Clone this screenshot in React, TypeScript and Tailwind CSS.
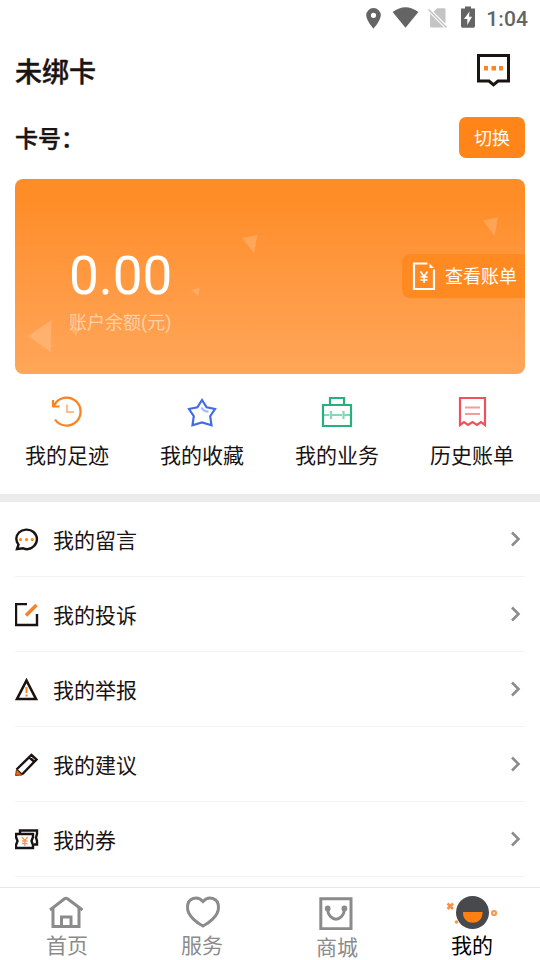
import type { ReactNode } from "react";

const font = "font-[Roboto,'Noto_Sans_CJK_SC',sans-serif]";

const StatusBar = () => (
  <div className="flex h-9 items-center justify-end pr-3 text-[#646464]">
    <svg width="118" height="36" viewBox="362 0 118 36" fill="currentColor">
      <path fillRule="evenodd" d="M373.5 8a7.3 7.3 0 0 1 7.3 7.3c0 5.2-7.3 13.4-7.3 13.4s-7.3-8.2-7.3-13.4a7.3 7.3 0 0 1 7.3-7.3zm0 4.7a2.6 2.6 0 1 0 0 5.2a2.6 2.6 0 1 0 0-5.2z" />
      <path d="M392.600 12Q405.500 2.500 418.400 12L405.500 27.700Z" />
      <path fill="#c4c4c4" d="M437 8.200h7.500q1 0 1 1V23.700L433.500 11.700zM430.500 14L444 27.500H431.500q-1.500 0-1.500-1.500V14z" />
      <path stroke="#c4c4c4" strokeWidth="1.600" d="M428.500 9.500L446.500 27.500" />
      <path fillRule="evenodd" d="M465 6.500h6V8.500h4V26q0 1.700-1.500 1.700H462.500Q461 27.700 461 26V8.500H465zM469.500 11.500L464 19H467.300V25L472 16.700H469Z" />
    </svg>
    <span className="ml-1.5 pt-0.5 text-[21px] leading-9 tracking-[0.1px] font-medium">1:04</span>
  </div>
);

const MessageIcon = () => (
  <svg width="34" height="34" viewBox="0 0 34 34" fill="none">
    <path d="M1.500 1.500H31.500V27H21L16.500 30.800L12 27H1.500Z" stroke="#1a1311" strokeWidth="3" />
    <path d="M7 12h4v4.500H7zM14.500 12h4.500v4.500h-4.500zM22 12h4v4.500h-4z" fill="#f5862a" />
  </svg>
);

const BillIcon = () => (
  <svg width="24" height="28" viewBox="0 0 24 28" fill="none" stroke="#fff" strokeWidth="2.200">
    <path d="M15.500 1.500H2V27H22V7.500" />
    <path d="M17.500 1.500L22 6H17.500Z" fill="#fff" stroke="none" />
    <path d="M8.500 9.500L12 14.500L15.500 9.500M12 14V21M8.500 15H15.500M8.500 18H15.500" strokeWidth="1.600" />
  </svg>
);

const shortcuts: { label: string; icon: ReactNode }[] = [
  {
    label: "我的足迹",
    icon: (
      <>
        <path d="M3.500 8.500A14 14 0 1 1 4 23.500" stroke="#fa821f" />
        <path d="M2 4V11M1.500 10.500H8.500M2 10.500L5 7" stroke="#fa821f" />
        <path d="M16 8.500V16H23" stroke="#ffbd91" />
      </>
    ),
  },
  {
    label: "我的收藏",
    icon: (
      <>
        <path d="M16 4L20.600 11.300L29 13L24.200 20.200L25.500 29.200L16 26.500L6.500 29.200L7.800 20.200L3 13L11.400 11.300Z" stroke="#426be6" />
        <path d="M15.500 11.500Q17.500 15.500 22.500 15.700" stroke="#a9b9fa" />
      </>
    ),
  },
  {
    label: "我的业务",
    icon: (
      <>
        <path d="M3 19H8.500M11 19H21M23.500 19H29M10 15V23M22.500 15V23" stroke="#87d6b6" />
        <path d="M2 9H30V30H2ZM9 9V2H23V9" stroke="#24b27c" />
      </>
    ),
  },
  {
    label: "历史账单",
    icon: (
      <>
        <path d="M4 29V2H29V29L25 26L21 29L16.500 26L12 29L8 26Z" stroke="#ef525c" />
        <path d="M9 11.500H24M9 18H24" stroke="#f59a9f" />
      </>
    ),
  },
];

const menu: { label: string; icon: ReactNode }[] = [
  {
    label: "我的留言",
    icon: (
      <>
        <path d="M2 21L3.500 16.700C0.500 13 0.500 8 4 4.500C7.500 1 14.500 0.500 18.500 4C23 8 23 14 19 18C15.500 21.500 11 21.500 8.300 20.300Z" />
        <path d="M4 11.500a1.600 1.600 0 1 0 3.200 0a1.600 1.600 0 1 0-3.200 0M9.900 11.500a1.600 1.600 0 1 0 3.200 0a1.600 1.600 0 1 0-3.200 0M15.700 11.500a1.600 1.600 0 1 0 3.200 0a1.600 1.600 0 1 0-3.200 0" fill="#ff861c" stroke="none" />
      </>
    ),
  },
  {
    label: "我的投诉",
    icon: (
      <>
        <path d="M12 1H1V22H22V11" />
        <path d="M11 12.500L21.500 2" stroke="#f5832a" strokeWidth="3.500" />
      </>
    ),
  },
  {
    label: "我的举报",
    icon: (
      <>
        <path d="M11.500 2.500L21 21H2Z" strokeWidth="2.600" />
        <path d="M11.500 9V15M11.500 16.500V18.500" stroke="#ff861c" strokeWidth="2" />
      </>
    ),
  },
  {
    label: "我的建议",
    icon: (
      <>
        <path d="M1.500 16.500L16.500 2L21.500 6.500L7 21.500M14 4L19.500 9M1.500 17L6.500 21.500" />
        <path d="M0.500 22.500L1.500 16.500L7 22Z" fill="#ec6b16" stroke="#8a3a0b" strokeWidth="1" />
      </>
    ),
  },
  {
    label: "我的券",
    icon: (
      <>
        <path d="M5 6V2.500H22V6L21 9.500L22 13V16.500H19" />
        <path d="M1 6H18V9L16.500 13L18 17V20H1V17L2.500 13L1 9Z" />
        <path d="M6.800 9L9.800 12.500L12.800 9M9.800 12.500V18M7 13H12.600M7 15.500H12.600" stroke="#f5975a" strokeWidth="1.300" />
      </>
    ),
  },
];

const tabs: { label: string; icon: ReactNode; active?: boolean; shift?: string }[] = [
  {
    label: "首页",
    icon: (
      <>
        <path d="M9 17L23.500 5.700Q25 4.700 26.500 5.700L41.500 17" />
        <path d="M12 15V33.500H38V15" />
        <path d="M20.500 33V24H30V33" />
      </>
    ),
  },
  {
    label: "服务",
    icon: <path d="M27 33C22 30.500 11.500 23.500 11.500 14.500C11.500 4.500 21.500 2.500 27 8.500C32.500 2.500 42.500 4.500 42.500 14.500C42.500 23.500 32 30.500 27 33Z" />,
  },
  {
    label: "商城",
    shift: "pt-0.5",
    icon: (
      <>
        <path d="M9.800 5.800H40V35.700H9.800Z" />
        <path d="M16.500 16C17.500 29.500 32.500 29.500 33.500 16" />
        <path d="M13.800 15.500a2.900 2.900 0 1 0 5.800 0a2.900 2.900 0 1 0-5.800 0M30.500 15.500a2.900 2.900 0 1 0 5.800 0a2.900 2.900 0 1 0-5.800 0" fill="#8b8b8b" stroke="none" />
      </>
    ),
  },
  {
    label: "我的",
    active: true,
    icon: (
      <>
        <circle cx="26.500" cy="19.500" r="16.500" fill="#48494d" stroke="none" />
        <path d="M17 19H36.500V20C36.500 33 17 33 17 20Z" fill="#ff7f12" stroke="none" />
        <path d="M1.500 10.500L7 16M7 10.500L1.500 16" stroke="#f7914a" strokeWidth="2.600" />
        <circle cx="48" cy="20" r="2" stroke="#fa964e" strokeWidth="2.200" />
        <circle cx="10.500" cy="29" r="1.800" fill="#fa964e" stroke="none" />
      </>
    ),
  },
];

const App = () => {
  return (
    <div className={`flex h-[960px] w-[540px] flex-col overflow-hidden bg-white text-[#1a1311] ${font}`}>
      <StatusBar />

      {/* Header */}
      <header className="flex h-[68px] items-center justify-between pl-[15px] pr-[29px] pt-0.5">
        <h1 className="pt-1 text-[27px] font-medium leading-none [-webkit-text-stroke:0.4px]">未绑卡</h1>
        <MessageIcon />
      </header>
      <div className="flex h-[75px] items-center justify-between px-[15px] pb-[9px]">
        <span className="pt-1.5 text-[23px] font-medium [-webkit-text-stroke:0.4px]">卡号：</span>
        <button className="h-[41px] w-[66px] rounded-[7px] bg-[#ff8518] pt-1 text-lg leading-none text-white">切换</button>
      </div>

      {/* Balance card */}
      <section className="relative mx-[15px] flex h-[195px] shrink-0 items-start justify-between overflow-hidden rounded-[8px] bg-linear-to-b from-[#ff8d27] from-10% to-[#ffa658]">
        <svg className="absolute inset-0" width="510" height="195" viewBox="15 179 510 195" fill="#fff" fillOpacity="0.180">
          <path d="M28 336L51.500 320L50.500 352Z" />
          <path d="M242 238L257.500 235L254 253Z" />
          <path d="M191 290L199.500 288L198.500 296Z" />
          <path d="M483 220.500L498 217.500L494.500 236Z" />
          <path d="M70 328L80 327L76 336Z" />
        </svg>
        <div className="relative ml-[54px] mt-[67px] text-white">
          <div className="text-[53px] leading-[60px]">0.00</div>
          <div className="mt-1 text-lg leading-[26px] text-[#ffd0a6]">账户余额(元)</div>
        </div>
        <div className="relative mt-[75px] flex h-11 w-[123px] items-center rounded-l-[8px] bg-[#ff8a22] pl-[10px] text-lg text-white">
          <BillIcon />
          <span className="ml-[9px] whitespace-nowrap pt-0.5 leading-none">查看账单</span>
        </div>
      </section>

      {/* Shortcuts */}
      <section className="grid h-[120px] shrink-0 grid-cols-4 pt-[22px]">
        {shortcuts.map(item => (
          <div key={item.label} className="flex w-[134px] flex-col items-center">
            <svg width="32" height="32" viewBox="0 0 32 32" fill="none" strokeWidth="2.200">
              {item.icon}
            </svg>
            <span className="mt-[13px] text-[21px] leading-[30px]">{item.label}</span>
          </div>
        ))}
      </section>
      <div className="h-2 shrink-0 bg-[#ebebeb]" />

      {/* Menu list */}
      <main className="min-h-0 flex-1 overflow-hidden px-[15px]">
        {menu.map(item => (
          <div key={item.label} className="flex h-[75px] items-center border-b border-[#f3f3f3]">
            <svg className="mt-0.5" width="24" height="24" viewBox="0 0 24 24" fill="none" stroke="#1a1311" strokeWidth="2.400">
              {item.icon}
            </svg>
            <span className="ml-3.5 flex-1 pt-1 text-[21px] leading-[30px]">{item.label}</span>
            <svg className="mr-[3px]" width="12" height="16" viewBox="0 0 12 16" fill="none" stroke="#8c8c8c" strokeWidth="2.600">
              <path d="M2 1.500L8.500 8L2 14.500" />
            </svg>
          </div>
        ))}
      </main>

      {/* Bottom tabs */}
      <nav className="grid h-[73px] shrink-0 grid-cols-4 border-t border-[#e8e8e8] pt-[5px]">
        {tabs.map(tab => (
          <div key={tab.label} className={`flex w-[134px] flex-col items-center ${tab.active ? "text-black" : "text-[#8b8b8b]"}`}>
            <svg width="52" height="37" viewBox="0 0 52 37" fill="none" stroke="#8b8b8b" strokeWidth="3">
              {tab.icon}
            </svg>
            <span className={`mt-px text-[21px] leading-[30px] ${tab.shift ?? ""}`}>{tab.label}</span>
          </div>
        ))}
      </nav>
    </div>
  );
};

export default App;
